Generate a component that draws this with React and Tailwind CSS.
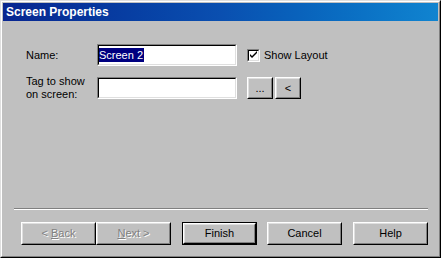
import React from "react";

function Raised({ children, className = "", def = false }) {
  const body = (
    <div className="h-full border border-t-white border-l-white border-r-black border-b-black">
      <div className="h-full flex items-center justify-center border border-t-[#dfdfdf] border-l-[#dfdfdf] border-r-[#808080] border-b-[#808080]">
        {children}
      </div>
    </div>
  );
  if (def) {
    return <div className={`border border-black ${className}`}>{body}</div>;
  }
  return <div className={className}>{body}</div>;
}

function Sunken({ children, className = "" }) {
  return (
    <div className={`border border-t-[#808080] border-l-[#808080] border-r-white border-b-white ${className}`}>
      <div className="h-full bg-white border border-t-black border-l-black border-r-[#dfdfdf] border-b-[#dfdfdf]">
        {children}
      </div>
    </div>
  );
}

const disabledText = "text-[#808080] [text-shadow:1px_1px_0_#ffffff]";

export default function App() {
  return (
    <div className="w-[441px] h-[258px] font-['Liberation_Sans',Arial,sans-serif] text-[11px] leading-[13px] text-black select-none">
      {/* Window frame */}
      <div className="w-full h-full border border-t-[#dfdfdf] border-l-[#dfdfdf] border-r-black border-b-black">
        <div className="w-full h-full border border-t-white border-l-white border-r-[#808080] border-b-[#808080] bg-[#c0c0c0] p-px flex flex-col">
          {/* Title bar */}
          <div className="h-[18px] shrink-0 bg-gradient-to-r from-[#082590] via-[#0a4fb0] to-[#1084d0] flex items-center pl-[3px]">
            <span className="text-white font-bold text-[12px] leading-[14px]">Screen Properties</span>
          </div>

          {/* Body */}
          <div className="flex-1 flex flex-col">
            <div className="pt-[23px] pl-[23px] flex flex-col gap-[11px]">
              {/* Name row */}
              <div className="flex items-center h-[22px]">
                <div className="w-[71px]">Name:</div>
                <Sunken className="w-[140px] h-[22px]">
                  <div className="h-full flex items-center">
                    <span className="bg-[#000080] text-white leading-[14px] pr-px">Screen 2</span>
                  </div>
                </Sunken>
                <div className="ml-[10px] flex items-center">
                  <Sunken className="w-[13px] h-[13px]">
                    <svg width="9" height="9" viewBox="0 0 9 9" className="block">
                      <path d="M1 3 L1 5 L3 7 L8 2 L8 0 L3 5 Z" fill="#000" />
                    </svg>
                  </Sunken>
                  <span className="ml-[4px]">Show Layout</span>
                </div>
              </div>

              {/* Tag row */}
              <div className="flex items-center h-[22px]">
                <div className="w-[71px]">
                  Tag to show
                  <br />
                  on screen:
                </div>
                <Sunken className="w-[140px] h-[22px]" />
                <div className="ml-[10px] flex gap-[2px]">
                  <Raised className="w-[26px] h-[22px]">...</Raised>
                  <Raised className="w-[26px] h-[22px]">&lt;</Raised>
                </div>
              </div>
            </div>

            {/* Footer */}
            <div className="mt-auto pb-[10px]">
              <div className="ml-[11px] mr-[10px] border-t border-t-[#808080] border-b border-b-white" />
              <div className="mt-[12px] pl-[18px] flex items-center">
                <Raised className="w-[75px] h-[23px]">
                  <span className={disabledText}>
                    &lt; <span className="underline">B</span>ack
                  </span>
                </Raised>
                <Raised className="w-[75px] h-[23px]">
                  <span className={disabledText}>
                    <span className="underline">N</span>ext &gt;
                  </span>
                </Raised>
                <Raised def className="ml-[11px] w-[75px] h-[23px]">Finish</Raised>
                <Raised className="ml-[10px] w-[75px] h-[23px]">Cancel</Raised>
                <Raised className="ml-[11px] w-[75px] h-[23px]">Help</Raised>
              </div>
            </div>
          </div>
        </div>
      </div>
    </div>
  );
}
